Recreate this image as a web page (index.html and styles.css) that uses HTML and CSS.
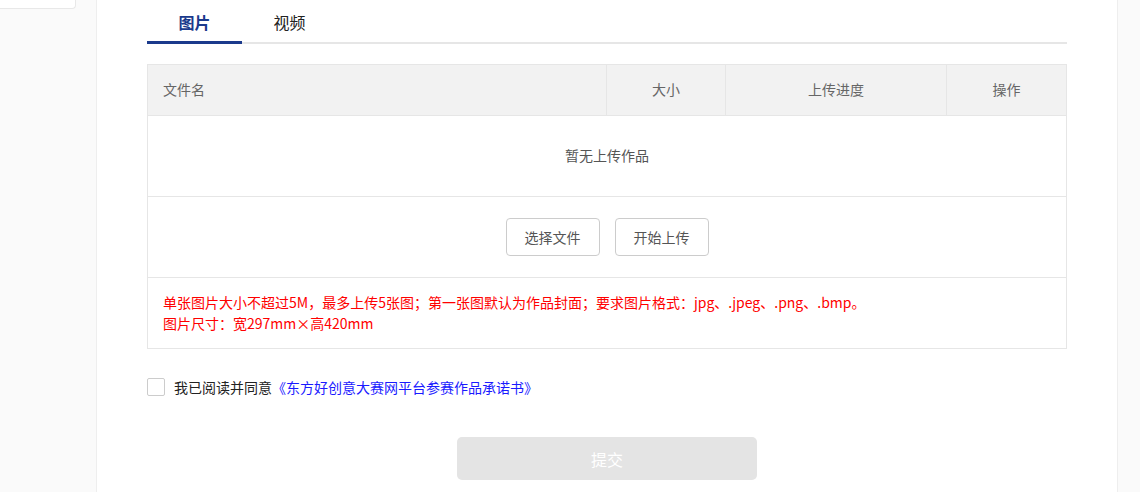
FILE: index.html
```html
<!DOCTYPE html>
<html lang="zh-CN">
<head>
<meta charset="utf-8">
<title>上传作品</title>
<link rel="stylesheet" href="styles.css">
</head>
<body>
<div class="page">
  <aside class="sidebar">
    <div class="side-box"></div>
  </aside>
  <main class="main">
    <div class="tabs">
      <div class="tab active">图片</div>
      <div class="tab">视频</div>
    </div>
    <table class="upload-table">
      <thead>
        <tr>
          <th class="col-name">文件名</th>
          <th class="col-size">大小</th>
          <th class="col-progress">上传进度</th>
          <th class="col-op">操作</th>
        </tr>
      </thead>
      <tbody>
        <tr>
          <td class="empty" colspan="4">暂无上传作品</td>
        </tr>
        <tr>
          <td class="actions" colspan="4">
            <div class="btn-group">
              <button class="btn">选择文件</button>
              <button class="btn">开始上传</button>
            </div>
          </td>
        </tr>
        <tr>
          <td class="note" colspan="4">单张图片大小不超过5M，最多上传5张图；第一张图默认为作品封面；要求图片格式：jpg、.jpeg、.png、.bmp。<br>图片尺寸：宽297mm×高420mm</td>
        </tr>
      </tbody>
    </table>
    <label class="agree">
      <span class="checkbox"></span>
      <span class="agree-text">我已阅读并同意<a class="agree-link">《东方好创意大赛网平台参赛作品承诺书》</a></span>
    </label>
    <div class="submit-wrap">
      <button class="submit">提交</button>
    </div>
  </main>
  <aside class="sidebar-right"></aside>
</div>
</body>
</html>
```

FILE: styles.css
```css
* { box-sizing: border-box; }
html, body { margin: 0; padding: 0; }
body {
  background: #fafafa;
  font-family: "Noto Sans CJK SC", "Microsoft YaHei", sans-serif;
  font-size: 14px;
  color: #333;
  height: 492px;
  overflow: hidden;
}
.page {
  display: flex;
  height: 492px;
}
.sidebar {
  width: 96px;
  flex: none;
}
.side-box {
  width: 76px;
  height: 9px;
  background: #fff;
  border-right: 1px solid #e8e8e8;
  border-bottom: 1px solid #e8e8e8;
  border-bottom-right-radius: 4px;
}
.main {
  width: 1022px;
  flex: none;
  background: #fff;
  border-left: 1px solid #eeeeee;
  border-right: 1px solid #eeeeee;
  padding: 0 50px;
}
.sidebar-right { flex: 1; }

.tabs {
  display: flex;
  border-bottom: 2px solid #e6e6e6;
  height: 44px;
}
.tab {
  width: 95px;
  height: 44px;
  padding-top: 3px;
  display: flex;
  align-items: center;
  justify-content: center;
  font-size: 16px;
  color: #222;
  border-bottom: 3px solid transparent;
  margin-bottom: -2px;
}
.tab.active {
  color: #1b3a8c;
  font-weight: bold;
  border-bottom-color: #1b3a8c;
}

.upload-table {
  margin-top: 20px;
  width: 919px;
  border-collapse: collapse;
  border: 1px solid #e6e6e6;
  table-layout: fixed;
}
.upload-table th {
  height: 51px;
  background: #f2f2f2;
  font-weight: normal;
  color: #666;
  font-size: 14px;
  border: 1px solid #e6e6e6;
  text-align: center;
  padding: 0 0 2px;
}
.upload-table th.col-name { width: 459px; text-align: left; padding-left: 15px; }
.upload-table th.col-size { width: 119px; }
.upload-table th.col-progress { width: 221px; }
.upload-table th.col-op { width: 120px; }
.upload-table td {
  border: 1px solid #e6e6e6;
  padding: 0;
}
.empty {
  height: 81px;
  text-align: center;
  color: #555;
  font-size: 14px;
  padding-bottom: 2px !important;
}
.actions { height: 81px; }
.btn-group {
  display: flex;
  justify-content: center;
  gap: 15px;
}
.btn {
  width: 94px;
  height: 38px;
  background: #fff;
  border: 1px solid #cccccc;
  border-radius: 4px;
  font-family: inherit;
  font-size: 14px;
  color: #555;
  padding: 0;
}
.note {
  color: #ff0000;
  font-size: 14px;
  line-height: 21px;
  padding: 14px 15px 14px !important;
}

.agree {
  display: flex;
  align-items: center;
  margin-top: 29px;
  height: 18px;
}
.checkbox {
  width: 18px;
  height: 18px;
  border: 1px solid #cccccc;
  border-radius: 2px;
  background: #fff;
  flex: none;
}
.agree-text {
  margin-left: 9px;
  font-size: 14px;
  color: #222;
  line-height: 18px;
}
.agree-link { color: #1a1aff; }

.submit-wrap {
  display: flex;
  justify-content: center;
  margin-top: 41px;
}
.submit {
  width: 300px;
  height: 43px;
  border: none;
  border-radius: 5px;
  background: #e4e4e4;
  color: #fff;
  font-family: inherit;
  font-size: 16px;
}
```
